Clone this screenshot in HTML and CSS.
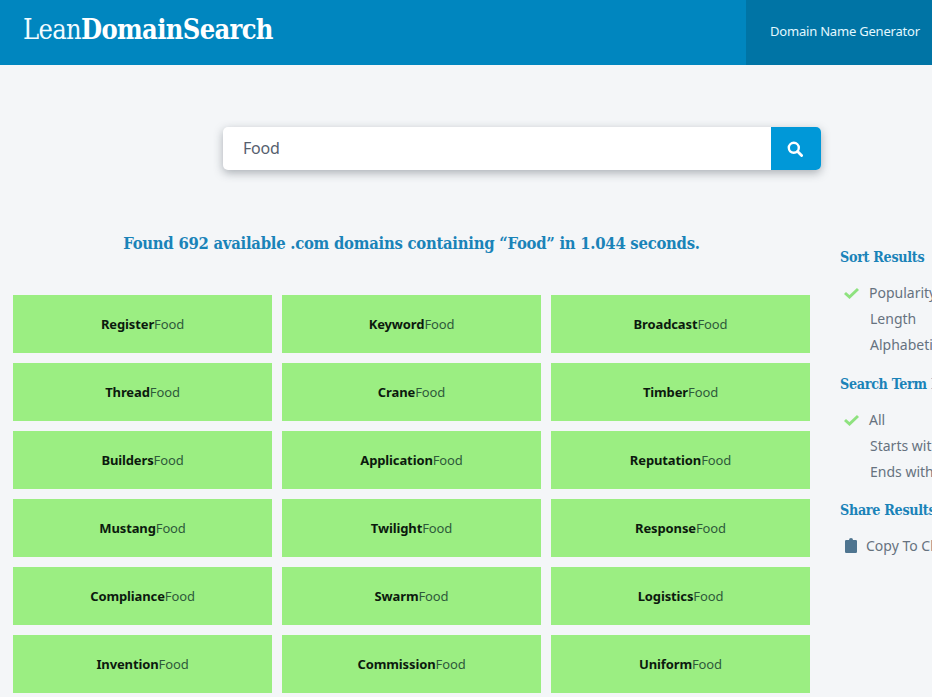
FILE: index.html
```html
<!DOCTYPE html>
<html lang="en">
<head>
<meta charset="utf-8">
<title>LeanDomainSearch</title>
<link rel="stylesheet" href="styles.css">
</head>
<body>
<header class="topbar">
  <a class="logo">Lean<b>DomainSearch</b></a>
  <a class="nav-tab">Domain Name Generator</a>
</header>
<div class="search-row">
  <div class="search-box">
    <span class="search-value">Food</span>
    <button class="search-btn" aria-label="Search">
      <svg width="16" height="16" viewBox="0 0 16 16"><circle cx="6.800" cy="6.800" r="5" fill="none" stroke="#fff" stroke-width="2.400"/><path d="M10.600 10.600 L14.600 14.600" stroke="#fff" stroke-width="2.800" stroke-linecap="round"/></svg>
    </button>
  </div>
</div>
<div class="content">
  <main class="results">
    <h1 class="found">Found 692 available .com domains containing “Food” in 1.044 seconds.</h1>
    <div class="grid">
      <a class="cell"><b>Register</b>Food</a>
      <a class="cell"><b>Keyword</b>Food</a>
      <a class="cell"><b>Broadcast</b>Food</a>
      <a class="cell"><b>Thread</b>Food</a>
      <a class="cell"><b>Crane</b>Food</a>
      <a class="cell"><b>Timber</b>Food</a>
      <a class="cell"><b>Builders</b>Food</a>
      <a class="cell"><b>Application</b>Food</a>
      <a class="cell"><b>Reputation</b>Food</a>
      <a class="cell"><b>Mustang</b>Food</a>
      <a class="cell"><b>Twilight</b>Food</a>
      <a class="cell"><b>Response</b>Food</a>
      <a class="cell"><b>Compliance</b>Food</a>
      <a class="cell"><b>Swarm</b>Food</a>
      <a class="cell"><b>Logistics</b>Food</a>
      <a class="cell"><b>Invention</b>Food</a>
      <a class="cell"><b>Commission</b>Food</a>
      <a class="cell"><b>Uniform</b>Food</a>
    </div>
  </main>
  <aside class="sidebar">
    <h2 class="side-title">Sort Results</h2>
    <ul class="side-list">
      <li class="on"><svg class="check" width="15" height="12" viewBox="0 0 15 12"><path d="M1 6 L5.500 10 L14 2" fill="none" stroke="#8ee27f" stroke-width="3"/></svg>Popularity</li>
      <li>Length</li>
      <li>Alphabetical</li>
    </ul>
    <h2 class="side-title">Search Term First</h2>
    <ul class="side-list">
      <li class="on"><svg class="check" width="15" height="12" viewBox="0 0 15 12"><path d="M1 6 L5.500 10 L14 2" fill="none" stroke="#8ee27f" stroke-width="3"/></svg>All</li>
      <li>Starts with</li>
      <li>Ends with</li>
    </ul>
    <h2 class="side-title">Share Results</h2>
    <div class="copy"><svg class="clip" width="12" height="15" viewBox="0 0 12 15"><path d="M1.200 2H4a2 2 0 0 1 4 0h2.800A1.200 1.200 0 0 1 12 3.200v10.600A1.200 1.200 0 0 1 10.800 15H1.200A1.200 1.200 0 0 1 0 13.800V3.200A1.200 1.200 0 0 1 1.200 2z" fill="#4f7590"/></svg>Copy To Clipboard</div>
  </aside>
</div>
</body>
</html>
```

FILE: styles.css
```css
* { box-sizing: border-box; }
html, body { margin: 0; height: 100%; overflow: hidden; }
body {
  background: #f4f6f8;
  font-family: "Noto Sans", "Open Sans", sans-serif;
  width: 932px;
}
.topbar {
  height: 65px;
  background: #0086bf;
  display: flex;
  justify-content: space-between;
  align-items: stretch;
}
.logo {
  margin-left: 23px;
  font-family: "DejaVu Serif Condensed", "DejaVu Serif", serif;
  font-size: 27px;
  letter-spacing: -.65px;
  line-height: 60px;
  color: #f2fbff;
}
.logo b { font-weight: 700; color: #fff; }
.nav-tab {
  width: 186px;
  background: #0074a5;
  color: #e3f8ff;
  font-size: 13px;
  letter-spacing: -.2px;
  line-height: 62px;
  padding-left: 24px;
  white-space: nowrap;
}
.search-row { padding: 62px 0 0 223px; }
.search-box {
  width: 598px;
  height: 43px;
  display: flex;
  background: #fff;
  border-radius: 5px;
  box-shadow: 0 3px 10px rgba(60, 70, 80, .4);
}
.search-value {
  flex: 1;
  padding-left: 20px;
  line-height: 42px;
  font-size: 16px;
  letter-spacing: -.2px;
  color: #56606e;
}
.search-btn {
  width: 50px;
  border: 0;
  background: #0098d8;
  border-radius: 0 5px 5px 0;
  display: flex;
  align-items: center;
  justify-content: center;
  padding: 0 2px 0 0;
}
.content { display: flex; }
.results { width: 840px; padding-left: 13px; flex: none; }
.found {
  margin: 63px 0 0;
  width: 797px;
  height: 62px;
  text-align: center;
  font-family: "DejaVu Serif Condensed", "DejaVu Serif", serif;
  font-size: 16.5px;
  font-weight: 700;
  letter-spacing: -.26px;
  line-height: 22px;
  color: #1a83b8;
}
.grid {
  width: 797px;
  display: grid;
  grid-template-columns: repeat(3, 259px);
  grid-auto-rows: 58px;
  gap: 10px;
}
.cell {
  background: #9bee82;
  display: flex;
  align-items: center;
  justify-content: center;
  font-size: 13px;
  letter-spacing: -.12px;
  color: #2e5a3a;
}
.cell b { font-weight: 700; color: #0c1a0e; }
.sidebar { flex: none; width: 200px; padding-top: 77px; white-space: nowrap; }
.side-title {
  margin: 0;
  font-family: "DejaVu Serif Condensed", "DejaVu Serif", serif;
  font-size: 14.2px;
  font-weight: 700;
  letter-spacing: -.3px;
  line-height: 20px;
  color: #1a83b8;
}
.side-list {
  list-style: none;
  margin: 13px 0 15.5px;
  padding: 0 0 0 30px;
}
.side-list li {
  position: relative;
  height: 26px;
  line-height: 26px;
  font-size: 14px;
  color: #66727f;
}
.side-list li.on { margin-left: -1px; }
.check { position: absolute; left: -25px; top: 7px; }
.copy {
  margin-top: 15.5px;
  padding-left: 5px;
  display: flex;
  align-items: center;
  gap: 9px;
  font-size: 14px;
  color: #66727f;
}
```
